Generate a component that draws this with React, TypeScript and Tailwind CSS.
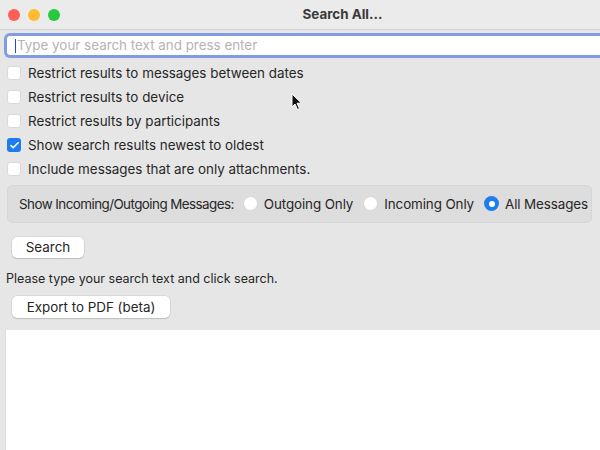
import { Check } from 'lucide-react'

const options = [
  { label: 'Restrict results to messages between dates', checked: false },
  { label: 'Restrict results to device', checked: false },
  { label: 'Restrict results by participants', checked: false },
  { label: 'Show search results newest to oldest', checked: true },
  { label: 'Include messages that are only attachments.', checked: false },
]

const radios = [
  { label: 'Outgoing Only', selected: false },
  { label: 'Incoming Only', selected: false },
  { label: 'All Messages', selected: true },
]

function Checkbox({ checked }: { checked: boolean }) {
  if (checked) {
    return (
      <div className="w-[14px] h-[14px] rounded-[3px] bg-[#1f7cf0] flex items-center justify-center flex-shrink-0">
        <Check className="w-[11px] h-[11px] text-white" strokeWidth={3.5} />
      </div>
    )
  }
  return <div className="w-[14px] h-[14px] rounded-[3px] bg-white border border-[#dadada] flex-shrink-0" />
}

function Radio({ selected }: { selected: boolean }) {
  if (selected) {
    return (
      <div className="w-[15px] h-[15px] rounded-full bg-[#1f7cf0] flex items-center justify-center flex-shrink-0">
        <div className="w-[6px] h-[6px] rounded-full bg-white" />
      </div>
    )
  }
  return <div className="w-[15px] h-[15px] rounded-full bg-white border border-[#d6d6d6] flex-shrink-0" />
}

export default function App() {
  return (
    <div className="w-[600px] h-[450px] bg-[#e6e6e6] overflow-hidden flex flex-col text-[13.4px] text-[#262626] whitespace-nowrap" style={{ fontFamily: 'Inter, "Liberation Sans", sans-serif' }}>
      {/* Title bar */}
      <div className="relative h-[30px] bg-[#ebebeb] border-b border-[#d2d2d2] flex items-center flex-shrink-0">
        <div className="flex items-center gap-[8px] pl-[8px]">
          <div className="w-[12px] h-[12px] rounded-full bg-[#fd5f57]" />
          <div className="w-[12px] h-[12px] rounded-full bg-[#febc2e]" />
          <div className="w-[12px] h-[12px] rounded-full bg-[#28c840]" />
        </div>
        <div className="flex-1 text-center font-bold text-[#3a3a3a] pl-[25px]">Search All...</div>
      </div>

      {/* Search field */}
      <div className="pl-[4px] pt-[3px] flex-shrink-0">
        <div className="h-[25px] bg-white border-[3px] border-r-0 border-[#7f9de0] rounded-l-[6px] flex items-center pl-[8px]">
          <div className="w-[1px] h-[14px] bg-[#1f4fc0] mr-[1px]" />
          <span className="text-[#b4b4b4]">Type your search text and press enter</span>
        </div>
      </div>

      {/* Options */}
      <div className="flex flex-col pl-[7px] pt-[3px] flex-shrink-0">
        {options.map(o => (
          <div key={o.label} className="h-[24px] flex items-center gap-[7px]">
            <Checkbox checked={o.checked} />
            <span>{o.label}</span>
          </div>
        ))}
      </div>

      {/* Direction group */}
      <div className="ml-[7px] mr-[8px] mt-[4px] h-[38px] bg-[#dddddd] rounded-[5px] border border-[#d6d6d6] flex items-center pl-[11px] flex-shrink-0">
        <span className="tracking-[-0.55px]">Show Incoming/Outgoing Messages:</span>
        <div className="flex items-center ml-[9px] gap-[10px]">
          {radios.map(r => (
            <div key={r.label} className="flex items-center gap-[6px]">
              <Radio selected={r.selected} />
              <span className="tracking-[-0.1px]">{r.label}</span>
            </div>
          ))}
        </div>
      </div>

      {/* Actions */}
      <div className="pl-[12px] pt-[14px] flex-shrink-0">
        <button className="h-[21px] w-[72px] bg-white rounded-[5px] shadow-[0_0_0_0.5px_rgba(0,0,0,0.12),0_1px_1px_rgba(0,0,0,0.12)] flex items-center justify-center">
          Search
        </button>
      </div>
      <div className="pl-[6px] pt-[12px] text-[12.5px] flex-shrink-0">Please type your search text and click search.</div>
      <div className="pl-[12px] pt-[7px] flex-shrink-0">
        <button className="h-[22px] w-[158px] bg-white rounded-[5px] shadow-[0_0_0_0.5px_rgba(0,0,0,0.12),0_1px_1px_rgba(0,0,0,0.12)] flex items-center justify-center">
          Export to PDF (beta)
        </button>
      </div>

      {/* Results area */}
      <div className="flex-1 ml-[5px] mt-[12px] bg-white border-l border-[#dcdcdc]" />

      {/* Cursor */}
      <svg className="absolute left-[291px] top-[93px]" width="12" height="18" viewBox="0 0 12 18">
        <path d="M1 1 L1 14 L4 11 L6.5 16.5 L8.5 15.5 L6 10.2 L10.5 10.2 Z" fill="#111" stroke="#fff" strokeWidth="1" />
      </svg>
    </div>
  )
}
